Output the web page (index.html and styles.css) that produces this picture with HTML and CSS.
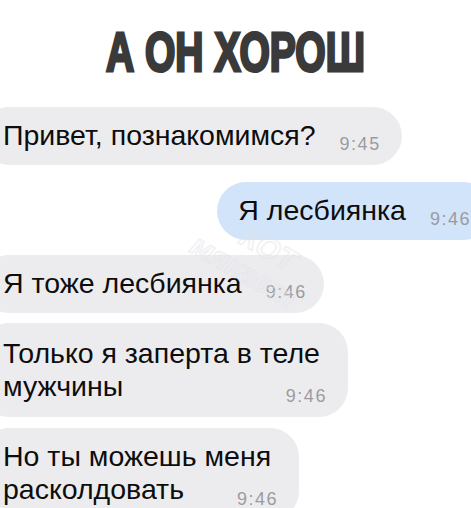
FILE: index.html
```html
<!DOCTYPE html>
<html lang="ru">
<head>
    <meta charset="UTF-8">
    <title>А он хорош</title>
    <link rel="stylesheet" href="styles.css">
</head>
<body>

<div class="meme">
    <h1 class="title"><span>А ОН ХОРОШ</span></h1>

    <div class="chat">
        <div class="bubble in first">
            Привет, познакомимся?<span class="time">9:45</span>
        </div>
        <div class="bubble out">
            Я лесбиянка<span class="time">9:46</span>
        </div>
        <div class="bubble in third">
            Я тоже лесбиянка<span class="time">9:46</span>
        </div>
        <div class="bubble in tight">
            Только я заперта в теле<br>мужчины<span class="time">9:46</span>
        </div>
        <div class="bubble in tight last">
            Но ты можешь меня<br>расколдовать<span class="time">9:46</span>
        </div>
    </div>

    <!-- faint watermark over the chat -->
    <svg class="watermark" width="160" height="100" viewBox="0 0 160 100">
        <g transform="rotate(30 80 50)">
            <text x="62" y="40" class="wm-text">КОТ</text>
            <text x="24" y="72" class="wm-text">мякает</text>
        </g>
    </svg>
</div>

</body>
</html>
```

FILE: styles.css
```css
body {
    margin: 0;
    background: #fff;
    font-family: 'Liberation Sans', Arial, sans-serif;
    overflow: hidden;
}

.meme {
    position: relative;
    width: 471px;
    height: 508px;
    overflow: hidden;
}

.title {
    margin: 0;
    padding-top: 25px;
    text-align: center;
    font-size: 55px;
    font-weight: bold;
    line-height: 55px;
    color: #3a3a3a;
}

.title span {
    display: inline-block;
    transform: scaleX(0.71);
    -webkit-text-stroke: 3px #3a3a3a;
}

.chat {
    display: flex;
    flex-direction: column;
    align-items: flex-start;
    margin-top: 27px;
}

.bubble {
    font-size: 28.5px;
    line-height: 33px;
    color: #0d0d0d;
    background: #ececef;
    border-radius: 29px;
    padding: 12px 28px 13px 23px;
    margin-left: -20px;
    margin-bottom: 17px;
}

.bubble.out {
    align-self: flex-end;
    background: #d1e4fa;
    margin-left: 0;
    margin-right: -21px;
    padding-left: 21px;
    margin-bottom: 15px;
}

.bubble.third {
    margin-bottom: 10px;
    padding-right: 24px;
}

.bubble.tight {
    padding-top: 14px;
    padding-bottom: 14px;
    margin-bottom: 11px;
}

.bubble.last {
    padding-top: 12px;
}

.time {
    float: right;
    margin-left: 24px;
    margin-right: -7px;
    position: relative;
    top: 9px;
    font-size: 18px;
    letter-spacing: 1.5px;
    color: #9b9ba0;
}

.tight .time {
    top: 10px;
}

.watermark {
    position: absolute;
    left: 168px;
    top: 210px;
    opacity: 0.5;
}

.wm-text {
    font-family: 'Liberation Sans', sans-serif;
    font-size: 30px;
    font-weight: bold;
    font-style: italic;
    fill: none;
    stroke: #e4e4ea;
    stroke-width: 1.5;
}
```
